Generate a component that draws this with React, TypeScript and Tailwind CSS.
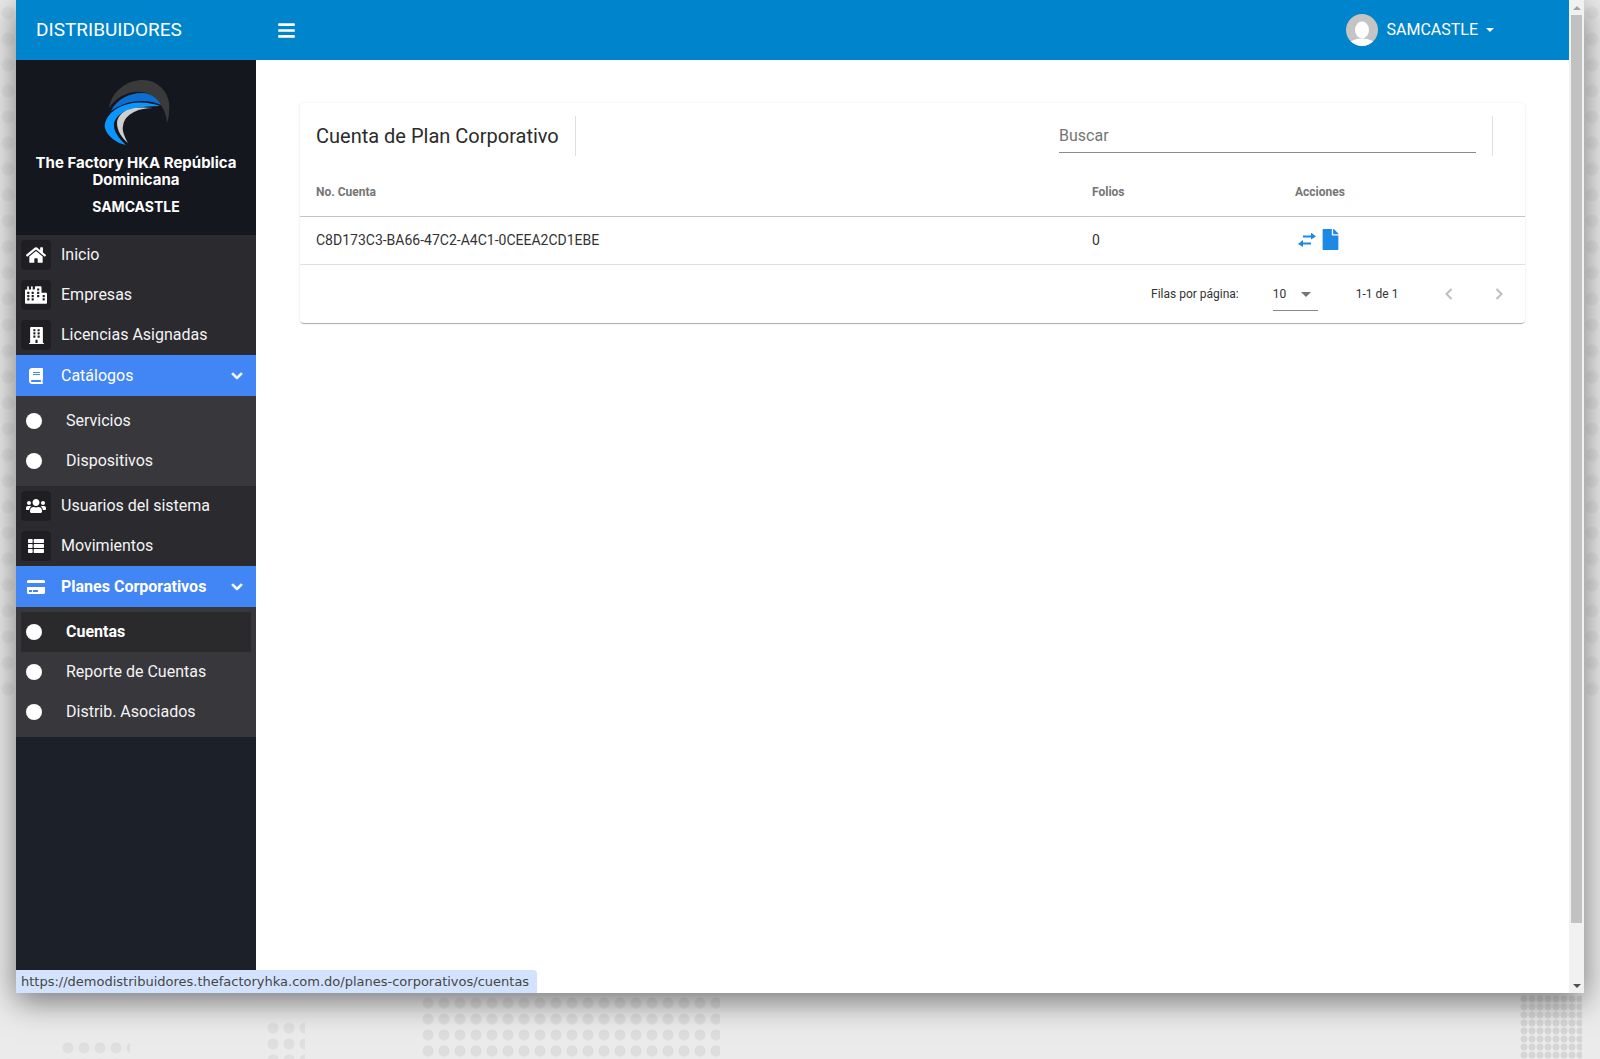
import type { ReactNode } from 'react';
import {
  FaBars,
  FaBook,
  FaBuilding,
  FaChevronDown,
  FaCity,
  FaCreditCard,
  FaFile,
  FaHome,
  FaThList,
  FaUsers,
} from 'react-icons/fa';

function Logo() {
  return (
    <svg viewBox="0 0 100 85" className="w-[100px] h-[85px]">
      <path d="M23 38C26 20 42 10 57 10C74 10 86 26 83 42C83 46 82 50 81 53C80 40 74 31 63 24C50 18 32 24 23 38Z" fill="#3a3a3a" />
      <path d="M25 41C31 28 46 22 58 23C66 24 72 29 75 35C62 29 42 29 25 41Z" fill="#0a6fd0" />
      <path d="M74 36C58 30 38 31 25 43C20 48 18 54 19 58C21 66 30 73 40 75C32 68 27 60 28 53C30 46 37 41 45 39C54 37 64 36 74 36Z" fill="#0a96ff" />
      <path d="M67 38C58 37 48 37 41 40C35 43 31 48 31 53C31 61 36 68 42 73C38 66 36 60 37 56C38 49 42 45 48 42C54 39 60 38 67 38Z" fill="#cfcfcf" />
    </svg>
  );
}

function NavItem({ icon, label }: { icon: ReactNode; label: string }) {
  return (
    <div className="h-10 flex items-center pl-[5px]">
      <span className="w-[30px] h-[30px] rounded bg-[#1f1e22] flex items-center justify-center text-white">{icon}</span>
      <span className="ml-[10px] text-base text-[#f4f4f4]">{label}</span>
    </div>
  );
}

function NavGroup({ icon, label, bold }: { icon: ReactNode; label: string; bold?: boolean }) {
  return (
    <div className="h-[41px] flex items-center pl-[5px] pr-[13px] bg-[#4285f4] text-white">
      <span className="w-[30px] flex items-center justify-center">{icon}</span>
      <span className={bold ? 'ml-[10px] text-base font-bold' : 'ml-[10px] text-base'}>{label}</span>
      <FaChevronDown className="ml-auto text-xs [stroke-width:40px]" />
    </div>
  );
}

function SubItem({ label, active }: { label: string; active?: boolean }) {
  return (
    <div className={active ? 'h-10 mx-[5px] flex items-center bg-[#2a292c] text-white font-bold' : 'h-10 mx-[5px] flex items-center text-[#f4f4f4]'}>
      <span className="w-4 h-4 ml-[5px] rounded-full bg-white" />
      <span className="ml-6 text-base">{label}</span>
    </div>
  );
}

function Sidebar() {
  return (
    <aside className="w-60 shrink-0 flex flex-col bg-[#1c2029]">
      <div className="h-[175px] bg-[#15171e] flex flex-col items-center">
        <div className="h-[95px] overflow-hidden pt-[10px]">
          <Logo />
        </div>
        <p className="w-[220px] mt-[-1px] text-center text-[15px] leading-[17px] font-bold text-white font-['Inter',sans-serif]">
          The Factory HKA República Dominicana
        </p>
        <p className="mt-[10px] text-center text-sm leading-[17px] font-bold text-white font-['Inter',sans-serif]">SAMCASTLE</p>
      </div>
      <div className="bg-[#2b2a2f]">
        <NavItem icon={<FaHome className="h-[18px] w-[20px]" />} label="Inicio" />
        <NavItem icon={<FaCity className="h-[18px] w-[22px]" />} label="Empresas" />
        <NavItem icon={<FaBuilding className="h-[17px] w-[15px]" />} label="Licencias Asignadas" />
      </div>
      <NavGroup icon={<FaBook className="h-4 w-[14px]" />} label="Catálogos" />
      <div className="bg-[#38373c] py-[5px]">
        <SubItem label="Servicios" />
        <SubItem label="Dispositivos" />
      </div>
      <div className="bg-[#2b2a2f]">
        <NavItem icon={<FaUsers className="h-4 w-5" />} label="Usuarios del sistema" />
        <NavItem icon={<FaThList className="h-4 w-4" />} label="Movimientos" />
      </div>
      <NavGroup icon={<FaCreditCard className="h-4 w-[18px]" />} label="Planes Corporativos" bold />
      <div className="bg-[#38373c] py-[5px]">
        <SubItem label="Cuentas" active />
        <SubItem label="Reporte de Cuentas" />
        <SubItem label="Distrib. Asociados" />
      </div>
    </aside>
  );
}

function Topbar() {
  return (
    <header className="h-[60px] shrink-0 bg-[#0084cc] text-white flex items-center">
      <div className="w-60 pl-5 pt-px text-[19px]">DISTRIBUIDORES</div>
      <FaBars className="ml-[21px] h-[19px] w-auto" />
      <div className="ml-auto mr-[75px] flex items-center">
        <svg viewBox="0 0 32 32" className="w-8 h-8 rounded-full">
          <rect width="32" height="32" fill="#c4c4c4" />
          <ellipse cx="16" cy="16" rx="7" ry="8.5" fill="#fff" />
          <ellipse cx="16" cy="32" rx="14" ry="7.5" fill="#fff" />
        </svg>
        <span className="ml-2 text-base">SAMCASTLE</span>
        <span className="ml-2 w-0 h-0 border-x-4 border-x-transparent border-t-4 border-t-white" />
      </div>
    </header>
  );
}

// Offset arrows: the top one points right, the lower one left
function ExchangeIcon() {
  return (
    <svg viewBox="0 0 18 14" className="w-[18px] h-[14px]" fill="#1e88e5">
      <path d="M5 3h8V0l5 4-5 3V5H5z" transform="translate(0 -0.5)" />
      <path d="M13 9.5H5V7L0 11l5 3v-2.5h8z" />
    </svg>
  );
}

function AccountsCard() {
  return (
    <section className="bg-white rounded shadow-[0_2px_1px_-1px_rgba(0,0,0,0.2),0_1px_1px_rgba(0,0,0,0.14),0_0_3px_rgba(0,0,0,0.08)]">
      <div className="h-[66px] flex items-center">
        <h2 className="h-10 pl-4 pr-4 flex items-center text-xl text-[#2b2b2b] border-r border-[#dedede]">Cuenta de Plan Corporativo</h2>
        <div className="ml-auto w-[417px] h-10 pt-[7px] border-b border-[#8a8a8a] flex items-center text-base text-[#757575] -translate-y-[3px]">Buscar</div>
        <div className="ml-4 mr-8 h-10 border-r border-[#dedede]" />
      </div>
      <div className="h-[48px] pb-[2px] grid grid-cols-[776px_203px_1fr] items-center border-b border-[#c4c4c4] text-xs font-bold text-[#757575]">
        <span className="pl-4">No. Cuenta</span>
        <span className="pl-4">Folios</span>
        <span className="pl-4">Acciones</span>
      </div>
      <div className="h-[48px] pb-[2px] grid grid-cols-[776px_203px_1fr] items-center border-b border-[#e0e0e0] text-sm text-[#333333]">
        <span className="pl-4">C8D173C3-BA66-47C2-A4C1-0CEEA2CD1EBE</span>
        <span className="pl-4">0</span>
        <span className="pl-[19px] flex items-center text-[#1e88e5]">
          <ExchangeIcon />
          <FaFile className="ml-1 h-[21px] w-auto" />
        </span>
      </div>
      <div className="h-[58px] flex items-center text-xs text-[#333333]">
        <span className="ml-[851px]">Filas por página:</span>
        <div className="ml-[34px] w-[45px] h-8 mt-[2px] pb-[1px] flex items-center border-b border-[#8a8a8a] justify-between pr-[7px]">
          <span>10</span>
          <span className="w-0 h-0 border-x-[5px] border-x-transparent border-t-[5px] border-t-[#757575]" />
        </div>
        <span className="ml-[38px]">1-1 de 1</span>
        <svg viewBox="0 0 12 12" className="ml-[45px] w-3 h-3" fill="none" stroke="#bdbdbd" strokeWidth="2">
          <path d="M8.5 1 3.5 6l5 5" />
        </svg>
        <svg viewBox="0 0 12 12" className="ml-[38px] w-3 h-3" fill="none" stroke="#bdbdbd" strokeWidth="2">
          <path d="M3.5 1l5 5-5 5" />
        </svg>
      </div>
    </section>
  );
}

function Scrollbar() {
  return (
    <div className="w-[15px] shrink-0 bg-[#f1f1f1] flex flex-col items-center">
      <div className="h-[15px] flex items-center justify-center">
        <span className="w-0 h-0 border-x-4 border-x-transparent border-b-4 border-b-[#a3a3a3]" />
      </div>
      <div className="w-[11px] h-[908px] bg-[#c1c1c1]" />
      <div className="mt-auto h-[15px] flex items-center justify-center">
        <span className="w-0 h-0 border-x-4 border-x-transparent border-t-4 border-t-[#505050]" />
      </div>
    </div>
  );
}

export default function App() {
  return (
    <div className="relative w-[1600px] h-[1059px] overflow-hidden bg-[#ebebeb] font-['Roboto',sans-serif]">
      {/* Backdrop dot texture */}
      <div className="absolute left-[420px] top-[995px] w-[300px] h-[64px] bg-[radial-gradient(circle,#dddddd_5px,transparent_6px)] bg-[length:16px_16px]" />
      <div className="absolute left-[1520px] top-[995px] w-[62px] h-[64px] bg-[radial-gradient(circle,#d6d6d6_3px,transparent_4px)] bg-[length:8px_8px]" />
      <div className="absolute left-[60px] top-[1040px] w-[70px] h-[19px] bg-[radial-gradient(circle,#dfdfdf_5px,transparent_6px)] bg-[length:16px_16px]" />
      <div className="absolute left-[265px] top-[1020px] w-[40px] h-[39px] bg-[radial-gradient(circle,#dfdfdf_5px,transparent_6px)] bg-[length:16px_16px]" />
      <div className="absolute left-0 top-0 w-4 h-[700px] bg-[radial-gradient(circle,#e2e2e2_6px,transparent_7px)] bg-[length:16px_26px]" />
      <div className="absolute left-[1584px] top-0 w-4 h-[700px] bg-[radial-gradient(circle,#e2e2e2_6px,transparent_7px)] bg-[length:16px_26px]" />

      <div className="relative ml-4 w-[1568px] h-[993px] flex bg-white shadow-[0_8px_30px_rgba(0,0,0,0.5)]">
        <div className="flex-1 min-w-0 flex flex-col">
          <Topbar />
          <div className="flex-1 flex min-h-0">
            <Sidebar />
            <main className="flex-1 min-w-0 pt-[43px] px-[44px]">
              <AccountsCard />
            </main>
          </div>
        </div>
        <Scrollbar />
        <div className="absolute left-0 bottom-0 h-[23px] w-[521px] pl-[5px] flex items-center rounded-tr bg-[#d3e3fd] text-[13px] text-[#444746] font-['DejaVu_Sans',sans-serif]">
          https://demodistribuidores.thefactoryhka.com.do/planes-corporativos/cuentas
        </div>
      </div>
    </div>
  );
}
